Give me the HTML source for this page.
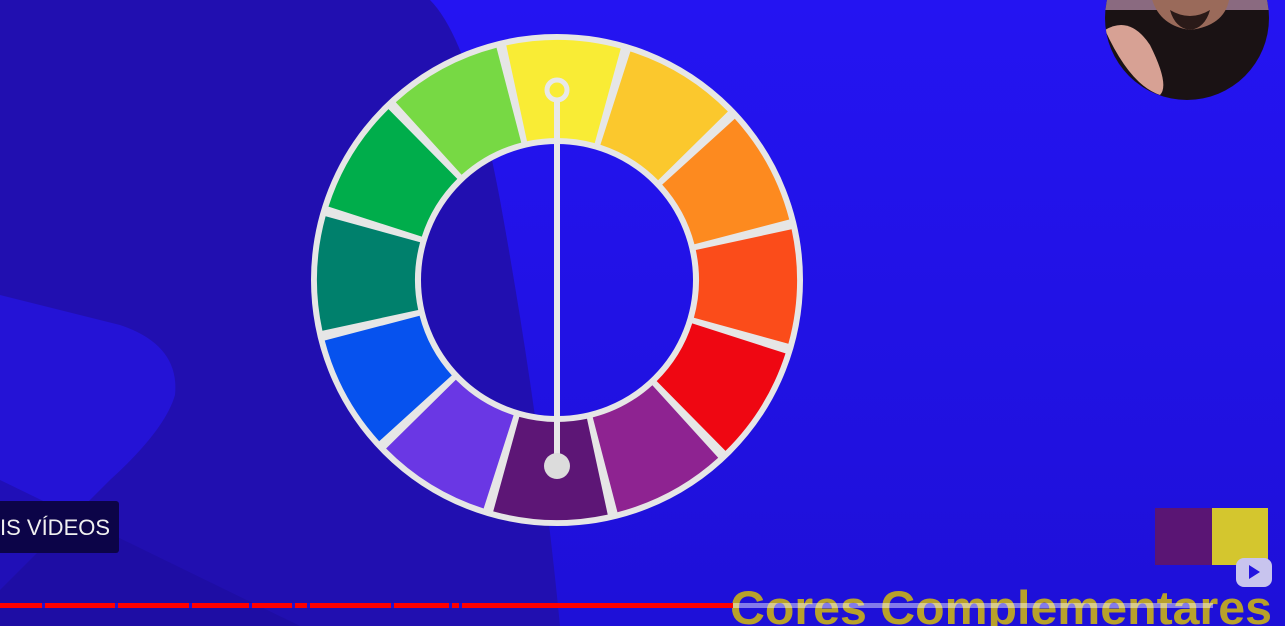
<!DOCTYPE html>
<html><head><meta charset="utf-8"><style>
html,body{margin:0;padding:0;width:1285px;height:626px;overflow:hidden;background:#2312ef;font-family:"Liberation Sans",sans-serif}
</style></head><body>
<svg width="1285" height="626" viewBox="0 0 1285 626" style="position:absolute;left:0;top:0">
<defs>
<linearGradient id="bg" x1="0" y1="0" x2="0" y2="1"><stop offset="0" stop-color="#2414f2"/><stop offset="1" stop-color="#1e10d8"/></linearGradient>
</defs>
<rect width="1285" height="626" fill="url(#bg)"/>
<path d="M0 0 L430 0 Q470 40 500 200 Q540 420 560 626 L0 626 Z" fill="#210fb0"/>
<path d="M0 295 L120 325 Q180 345 175 395 Q165 430 110 480 L0 590 Z" fill="#2413d6"/>
<path d="M0 480 L0 626 L300 626 Z" fill="#1c0c98" opacity="0.5"/>
<!-- wheel -->
<circle cx="557" cy="280" r="191" fill="none" stroke="#e6e6e6" stroke-width="110"/>
<g fill="none" stroke-width="98" stroke-dasharray="92 1300">
<circle cx="557" cy="280" r="191" stroke="#f9ec35" transform="rotate(-102.2 557 280)"/>
<circle cx="557" cy="280" r="191" stroke="#fbc82d" transform="rotate(-72.2 557 280)"/>
<circle cx="557" cy="280" r="191" stroke="#fd8a1f" transform="rotate(-42.2 557 280)"/>
<circle cx="557" cy="280" r="191" stroke="#fb4c1a" transform="rotate(-12.2 557 280)"/>
<circle cx="557" cy="280" r="191" stroke="#ef0712" transform="rotate(17.8 557 280)"/>
<circle cx="557" cy="280" r="191" stroke="#8e2391" transform="rotate(47.8 557 280)"/>
<circle cx="557" cy="280" r="191" stroke="#5d1676" transform="rotate(77.8 557 280)"/>
<circle cx="557" cy="280" r="191" stroke="#6a37e4" transform="rotate(107.8 557 280)"/>
<circle cx="557" cy="280" r="191" stroke="#0652ee" transform="rotate(137.8 557 280)"/>
<circle cx="557" cy="280" r="191" stroke="#00806c" transform="rotate(167.8 557 280)"/>
<circle cx="557" cy="280" r="191" stroke="#00ad4b" transform="rotate(197.8 557 280)"/>
<circle cx="557" cy="280" r="191" stroke="#77d944" transform="rotate(227.8 557 280)"/>
</g>
<line x1="557" y1="98" x2="557" y2="466" stroke="#e8e8e8" stroke-width="6"/>
<circle cx="557" cy="90" r="10" fill="#f9ec35" stroke="#e8e8e8" stroke-width="5"/>
<circle cx="557" cy="466" r="13" fill="#dcdcdc"/>
<!-- webcam -->
<clipPath id="cc"><circle cx="1187" cy="18" r="82"/></clipPath>
<g clip-path="url(#cc)">
<rect x="1100" y="-70" width="180" height="180" fill="#1a1214"/>
<rect x="1100" y="-70" width="180" height="80" fill="#8a6a80"/>
<path d="M1150 -10 L1230 -10 Q1230 25 1190 30 Q1155 25 1150 -10Z" fill="#9a6a5a"/>
<path d="M1170 10 Q1190 22 1210 10 Q1205 28 1190 30 Q1175 28 1170 10Z" fill="#2a1a18"/>
<path d="M1105 30 Q1130 15 1150 45 Q1170 85 1160 95 Q1130 85 1105 30Z" fill="#d7a194"/>
</g>
<!-- button -->
<rect x="-8" y="501" width="127" height="52" rx="3" fill="#0c0448"/>
<text x="0" y="535" font-size="22" fill="#f0f0f0">IS VÍDEOS</text>
<!-- squares -->
<rect x="1155" y="508" width="57" height="57" fill="#5a1574"/>
<rect x="1212" y="508" width="56" height="57" fill="#d4c62e"/>
<rect x="1236" y="558" width="36" height="29" rx="8" fill="#c8c4ee"/>
<path d="M1249 565 L1260 572 L1249 579Z" fill="#2414e0"/>
<text x="730" y="624" font-size="47" font-weight="bold" fill="#b8a12a" textLength="542" lengthAdjust="spacingAndGlyphs">Cores Complementares</text>
<!-- progress -->
<rect x="0" y="603" width="733" height="5" fill="#ff0000"/>
<g fill="#2312d0">
<rect x="42" y="603" width="3" height="5"/><rect x="115" y="603" width="3" height="5"/><rect x="189" y="603" width="3" height="5"/><rect x="249" y="603" width="3" height="5"/><rect x="292" y="603" width="3" height="5"/><rect x="307" y="603" width="3" height="5"/><rect x="391" y="603" width="3" height="5"/><rect x="449" y="603" width="3" height="5"/><rect x="459" y="603" width="3" height="5"/>
</g>
<rect x="733" y="603" width="480" height="5" fill="#ffffff" opacity="0.45"/>
</svg>
</body></html>
